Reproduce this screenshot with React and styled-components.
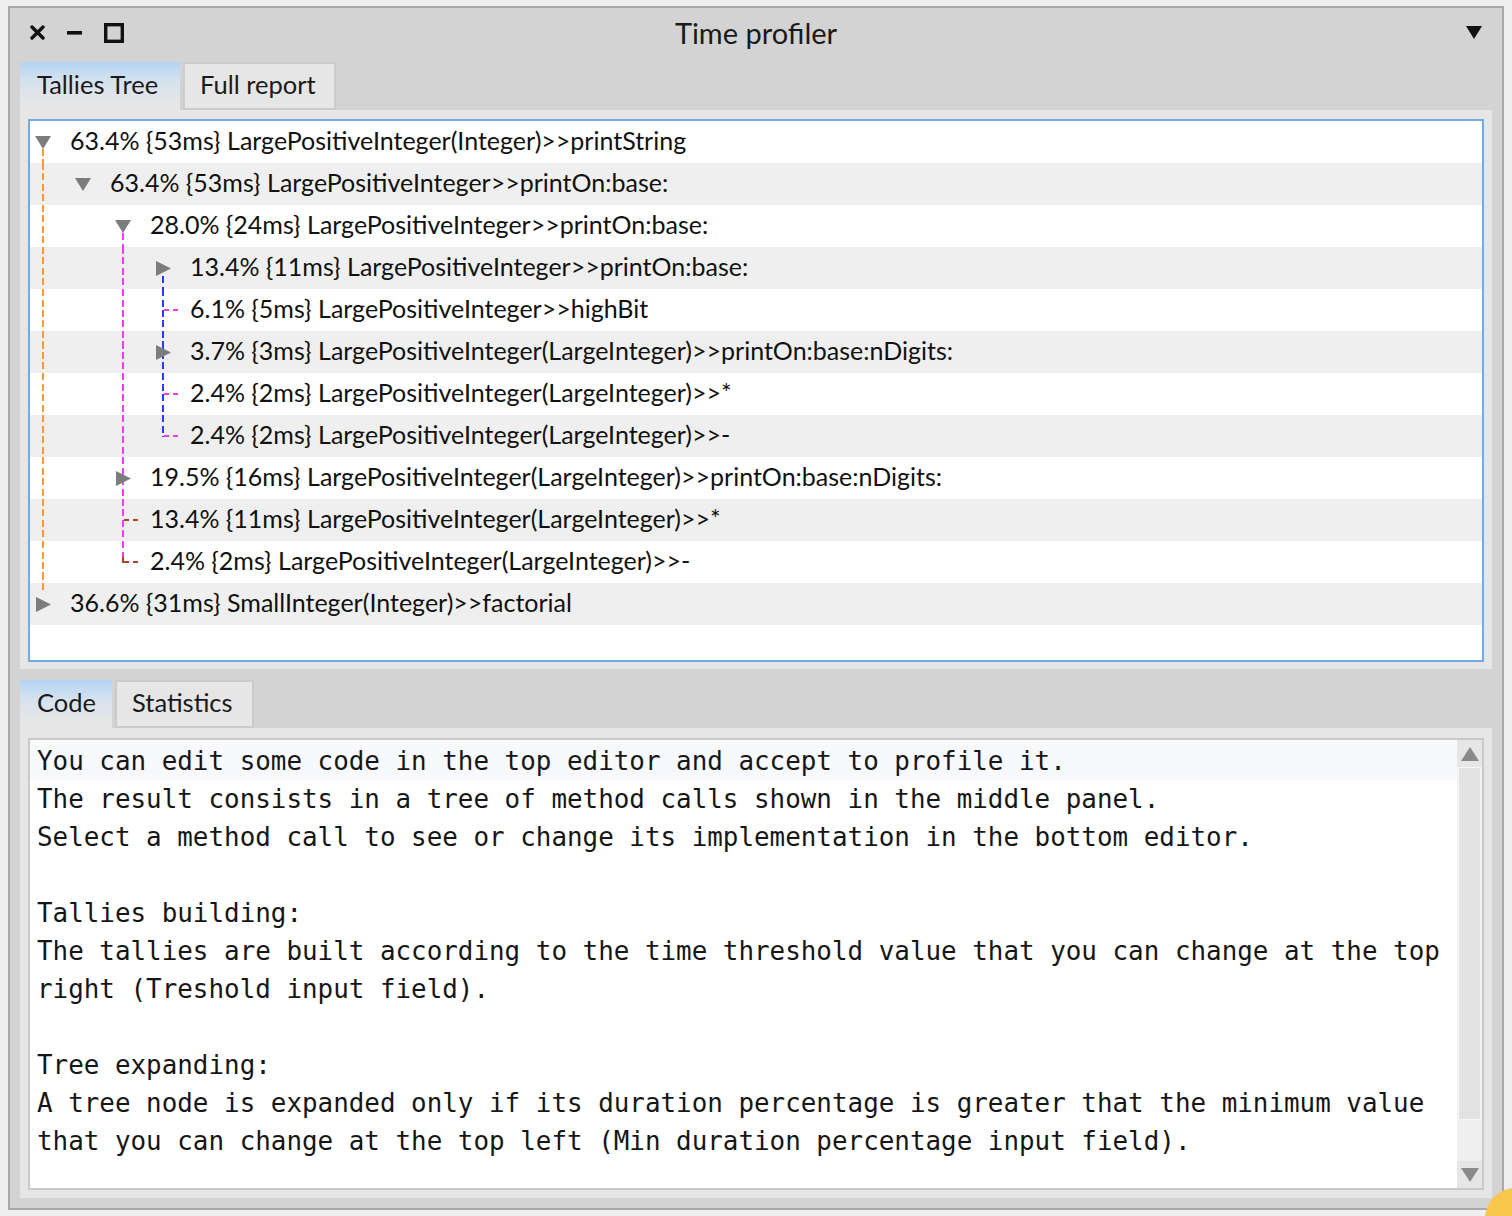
import React from 'react';
import styled, { createGlobalStyle, css } from 'styled-components';

const GlobalStyle = createGlobalStyle`
  html, body {
    margin: 0;
    padding: 0;
    background: #eeeeee;
  }
  body {
    font-family: Lato, "Noto Sans", sans-serif;
    color: #171717;
  }
`;

const Window = styled.div`
  box-sizing: border-box;
  margin: 6px 0 0 8px;
  width: 1496px;
  height: 1204px;
  border: 2px solid #a9a9a9;
  background: #d3d3d3;
  padding: 0 10px 10px;
  display: flex;
  flex-direction: column;
`;

const TitleBar = styled.div`
  box-sizing: border-box;
  height: 54px;
  margin: 0 -10px;
  padding: 0 20px 5px;
  display: grid;
  grid-template-columns: 1fr auto 1fr;
  align-items: center;
`;

const WindowButtons = styled.div`
  display: flex;
  align-items: center;
  gap: 22px;
`;

const Title = styled.div`
  font-size: 29px;
  color: #1a1a1a;
`;

const Menu = styled.div`
  justify-self: end;
  display: flex;
`;

const TabStrip = styled.div`
  display: flex;
  gap: 3px;
  height: 48px;
  margin-top: ${(p) => p.$top || 0}px;
`;

const Tab = styled.div`
  box-sizing: border-box;
  width: ${(p) => p.$w}px;
  height: 48px;
  padding: 0 0 5px 17px;
  display: flex;
  align-items: center;
  font-size: 25.5px;
  color: #1a1a1a;
  ${(p) =>
    p.$active
      ? css`
          background: linear-gradient(#b3d4f4, #d6e2ee 40%, #e6e6e6 85%);
        `
      : css`
          background: #e6e6e6;
          border: 2px solid #cbcbcb;
          padding-left: 15px;
        `}
`;

const TabBody = styled.div`
  box-sizing: border-box;
  height: ${(p) => p.$h}px;
  background: #e6e6e6;
  padding: ${(p) => p.$pad};
`;

const TreePanel = styled.div`
  box-sizing: border-box;
  height: 100%;
  border: 2px solid #72aae6;
  background: #ffffff;
  overflow: hidden;
`;

const Row = styled.div`
  position: relative;
  height: 42px;
  display: flex;
  align-items: center;
  padding-left: ${(p) => p.$depth * 40}px;
  background: ${(p) => (p.$odd ? '#efefef' : '#ffffff')};
`;

const Toggle = styled.div`
  position: relative;
  z-index: 1;
  flex: none;
  width: 26px;
  height: 42px;
  display: flex;
  align-items: center;
  justify-content: center;
`;

const Label = styled.span`
  position: relative;
  z-index: 1;
  margin: 0 0 4px 14px;
  font-size: 25px;
  white-space: nowrap;
  color: #111111;
`;

const VGuide = styled.span`
  position: absolute;
  left: ${(p) => p.$x - 1}px;
  top: ${(p) => p.$from}px;
  height: ${(p) => p.$to - p.$from}px;
  width: 2px;
  background: repeating-linear-gradient(
    to bottom,
    ${(p) => p.$color} 0 7px,
    transparent 7px 10.5px
  );
`;

const HGuide = styled.span`
  position: absolute;
  left: ${(p) => p.$x}px;
  top: 20px;
  width: 16px;
  height: 2px;
  background: repeating-linear-gradient(
    to right,
    ${(p) => p.$color} 0 5px,
    transparent 5px 9px
  );
`;

const Editor = styled.div`
  box-sizing: border-box;
  height: 100%;
  border: 2px solid #c9c9c9;
  background: #ffffff;
  display: flex;
`;

const CodeText = styled.div`
  flex: 1;
  padding-top: 2px;
  font-family: "DejaVu Sans Mono", "Liberation Mono", monospace;
  font-size: 25.9px;
  line-height: 38px;
  color: #161616;
`;

const CodeLine = styled.div`
  height: 38px;
  padding-left: 7px;
  white-space: pre;
  background: ${(p) => (p.$current ? '#f7f9fd' : 'transparent')};
`;

const Scrollbar = styled.div`
  flex: none;
  width: 25px;
  display: flex;
  flex-direction: column;
  background: #efefef;
`;

const ScrollArrow = styled.div`
  height: 27px;
  display: flex;
  align-items: center;
  justify-content: center;
  background: #e6e6e6;
`;

const Thumb = styled.div`
  box-sizing: border-box;
  height: 353px;
  margin: 0 1px;
  background: #e3e3e3;
  border: 1px solid #f7f7f7;
`;

const Track = styled.div`
  flex: 1;
`;

const ResizeDot = styled.div`
  position: fixed;
  left: 1485px;
  top: 1188px;
  width: 62px;
  height: 62px;
  border-radius: 50%;
  background: #f8c64a;
`;

const ORANGE = '#f59a3a';
const MAGENTA = '#f23cf2';
const BLUE = '#2a3cf0';
const BROWN = '#b0402a';

const rows = [
  { depth: 0, state: 'open', text: '63.4% {53ms} LargePositiveInteger(Integer)>>printString',
    v: [[13, 28, 42, ORANGE]] },
  { depth: 1, state: 'open', text: '63.4% {53ms} LargePositiveInteger>>printOn:base:',
    v: [[13, 0, 42, ORANGE]] },
  { depth: 2, state: 'open', text: '28.0% {24ms} LargePositiveInteger>>printOn:base:',
    v: [[13, 0, 42, ORANGE], [93, 28, 42, MAGENTA]] },
  { depth: 3, state: 'closed', text: '13.4% {11ms} LargePositiveInteger>>printOn:base:',
    v: [[13, 0, 42, ORANGE], [93, 0, 42, MAGENTA], [133, 29, 42, BLUE]] },
  { depth: 3, state: 'leaf', text: '6.1% {5ms} LargePositiveInteger>>highBit',
    v: [[13, 0, 42, ORANGE], [93, 0, 42, MAGENTA], [133, 0, 42, BLUE]], h: [134, MAGENTA] },
  { depth: 3, state: 'closed', text: '3.7% {3ms} LargePositiveInteger(LargeInteger)>>printOn:base:nDigits:',
    v: [[13, 0, 42, ORANGE], [93, 0, 42, MAGENTA], [133, 0, 42, BLUE]] },
  { depth: 3, state: 'leaf', text: '2.4% {2ms} LargePositiveInteger(LargeInteger)>>*',
    v: [[13, 0, 42, ORANGE], [93, 0, 42, MAGENTA], [133, 0, 42, BLUE]], h: [134, MAGENTA] },
  { depth: 3, state: 'leaf', text: '2.4% {2ms} LargePositiveInteger(LargeInteger)>>-',
    v: [[13, 0, 42, ORANGE], [93, 0, 42, MAGENTA], [133, 0, 22, BLUE]], h: [134, MAGENTA] },
  { depth: 2, state: 'closed', text: '19.5% {16ms} LargePositiveInteger(LargeInteger)>>printOn:base:nDigits:',
    v: [[13, 0, 42, ORANGE], [93, 0, 42, MAGENTA]] },
  { depth: 2, state: 'leaf', text: '13.4% {11ms} LargePositiveInteger(LargeInteger)>>*',
    v: [[13, 0, 42, ORANGE], [93, 0, 42, MAGENTA]], h: [94, BROWN] },
  { depth: 2, state: 'leaf', text: '2.4% {2ms} LargePositiveInteger(LargeInteger)>>-',
    v: [[13, 0, 42, ORANGE], [93, 0, 16, MAGENTA], [93, 16, 22, BROWN]], h: [94, BROWN] },
  { depth: 0, state: 'closed', text: '36.6% {31ms} SmallInteger(Integer)>>factorial',
    v: [[13, 0, 10, ORANGE]] },
];

const codeLines = [
  'You can edit some code in the top editor and accept to profile it.',
  'The result consists in a tree of method calls shown in the middle panel.',
  'Select a method call to see or change its implementation in the bottom editor.',
  '',
  'Tallies building:',
  'The tallies are built according to the time threshold value that you can change at the top',
  'right (Treshold input field).',
  '',
  'Tree expanding:',
  'A tree node is expanded only if its duration percentage is greater that the minimum value',
  'that you can change at the top left (Min duration percentage input field).',
];

const Arrow = ({ dir, color = '#7c7c7c' }) => {
  if (dir === 'down') {
    return (
      <svg width="16" height="13" viewBox="0 0 16 13">
        <polygon points="0,0 16,0 8,13" fill={color} />
      </svg>
    );
  }
  if (dir === 'up') {
    return (
      <svg width="18" height="14" viewBox="0 0 18 14">
        <polygon points="0,14 18,14 9,0" fill={color} />
      </svg>
    );
  }
  return (
    <svg width="15" height="15" viewBox="0 0 15 15">
      <polygon points="0,0 15,7.5 0,15" fill={color} />
    </svg>
  );
};

const TreeRow = ({ row, index }) => (
  <Row $depth={row.depth} $odd={index % 2 === 1}>
    {row.v.map(([x, from, to, color], i) => (
      <VGuide key={i} $x={x} $from={from} $to={to} $color={color} />
    ))}
    {row.h && <HGuide $x={row.h[0]} $color={row.h[1]} />}
    <Toggle>
      {row.state === 'open' && <Arrow dir="down" />}
      {row.state === 'closed' && <Arrow dir="right" />}
    </Toggle>
    <Label>{row.text}</Label>
  </Row>
);

export default function App() {
  return (
    <>
      <GlobalStyle />
      <Window>
        <TitleBar>
          <WindowButtons>
            <svg width="15" height="15" viewBox="0 0 15 15">
              <path d="M2 2 L13 13 M13 2 L2 13" stroke="#111" strokeWidth="3.4" strokeLinecap="round" />
            </svg>
            <svg width="15" height="15" viewBox="0 0 15 15">
              <rect x="0" y="6" width="15" height="3.6" fill="#111" />
            </svg>
            <svg width="20" height="20" viewBox="0 0 20 20">
              <rect x="1.7" y="1.7" width="16.6" height="16.6" fill="none" stroke="#111" strokeWidth="3.4" />
            </svg>
          </WindowButtons>
          <Title>Time profiler</Title>
          <Menu>
            <Arrow dir="down" color="#111" />
          </Menu>
        </TitleBar>

        <TabStrip>
          <Tab $active $w={160}>Tallies Tree</Tab>
          <Tab $w={153}>Full report</Tab>
        </TabStrip>
        <TabBody $h={559} $pad="9px 8px 7px">
          <TreePanel>
            {rows.map((row, i) => (
              <TreeRow key={i} row={row} index={i} />
            ))}
          </TreePanel>
        </TabBody>

        <TabStrip $top={11}>
          <Tab $active $w={92}>Code</Tab>
          <Tab $w={139}>Statistics</Tab>
        </TabStrip>
        <TabBody $h={470} $pad="10px 8px 8px">
          <Editor>
            <CodeText>
              {codeLines.map((line, i) => (
                <CodeLine key={i} $current={i === 0}>{line}</CodeLine>
              ))}
            </CodeText>
            <Scrollbar>
              <ScrollArrow>
                <Arrow dir="up" color="#8a8a8a" />
              </ScrollArrow>
              <Thumb />
              <Track />
              <ScrollArrow>
                <svg width="18" height="14" viewBox="0 0 18 14">
                  <polygon points="0,0 18,0 9,14" fill="#8a8a8a" />
                </svg>
              </ScrollArrow>
            </Scrollbar>
          </Editor>
        </TabBody>
      </Window>
      <ResizeDot />
    </>
  );
}
